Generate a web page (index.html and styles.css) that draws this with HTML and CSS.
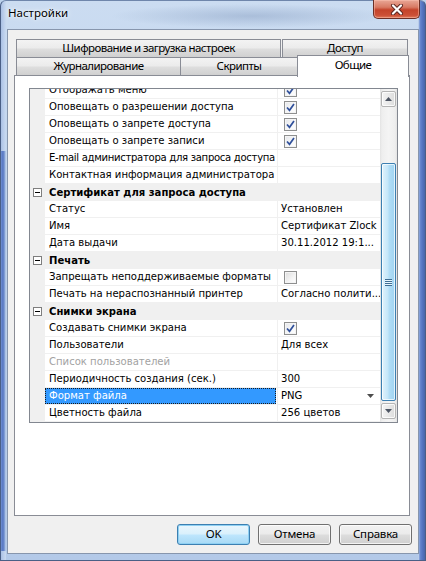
FILE: index.html
```html
<!DOCTYPE html>
<html lang="ru">
<head>
<meta charset="utf-8">
<title>Настройки</title>
<link rel="stylesheet" href="styles.css">
</head>
<body>
<div class="window">
  <div class="titlebar">
    <span class="title">Настройки</span>
    <div class="close">
      <svg width="14" height="11" viewBox="0 0 14 11">
        <path d="M3 1.5 L11 9.5 M11 1.5 L3 9.5" stroke="#5b2620" stroke-width="4" stroke-linecap="round"/>
        <path d="M3 1.5 L11 9.5 M11 1.5 L3 9.5" stroke="#ffffff" stroke-width="2.2" stroke-linecap="round"/>
      </svg>
    </div>
  </div>
  <div class="client">
    <div class="tabs">
      <div class="tabrow row1">
        <div class="tab t-enc">Шифрование и загрузка настроек</div>
        <div class="tab t-acc">Доступ</div>
      </div>
      <div class="tabrow row2">
        <div class="tab t-log">Журналирование</div>
        <div class="tab t-scr">Скрипты</div>
        <div class="tab t-gen active">Общие</div>
      </div>
    </div>
    <div class="panel">
      <div class="grid">
        <div class="rows">
          <div class="list">
            <div class="row"><span class="gut"></span><span class="name">Отображать меню</span><span class="val"><span class="cb on"><svg width="11" height="11" viewBox="0 0 11 11"><path d="M2 5.5 L4.5 8.3 L9 2" fill="none" stroke="#2f4f9a" stroke-width="1.7"/></svg></span></span></div>
            <div class="row"><span class="gut"></span><span class="name">Оповещать о разрешении доступа</span><span class="val"><span class="cb on"><svg width="11" height="11" viewBox="0 0 11 11"><path d="M2 5.5 L4.5 8.3 L9 2" fill="none" stroke="#2f4f9a" stroke-width="1.7"/></svg></span></span></div>
            <div class="row"><span class="gut"></span><span class="name">Оповещать о запрете доступа</span><span class="val"><span class="cb on"><svg width="11" height="11" viewBox="0 0 11 11"><path d="M2 5.5 L4.5 8.3 L9 2" fill="none" stroke="#2f4f9a" stroke-width="1.7"/></svg></span></span></div>
            <div class="row"><span class="gut"></span><span class="name">Оповещать о запрете записи</span><span class="val"><span class="cb on"><svg width="11" height="11" viewBox="0 0 11 11"><path d="M2 5.5 L4.5 8.3 L9 2" fill="none" stroke="#2f4f9a" stroke-width="1.7"/></svg></span></span></div>
            <div class="row"><span class="gut"></span><span class="name tight">E-mail администратора для запроса доступа</span><span class="val"></span></div>
            <div class="row"><span class="gut"></span><span class="name">Контактная информация администратора</span><span class="val"></span></div>
            <div class="cat"><span class="box"></span><span class="ctext">Сертификат для запроса доступа</span></div>
            <div class="row"><span class="gut"></span><span class="name">Статус</span><span class="val">Установлен</span></div>
            <div class="row"><span class="gut"></span><span class="name">Имя</span><span class="val">Сертификат Zlock</span></div>
            <div class="row"><span class="gut"></span><span class="name">Дата выдачи</span><span class="val">30.11.2012 19:1...</span></div>
            <div class="cat"><span class="box"></span><span class="ctext">Печать</span></div>
            <div class="row"><span class="gut"></span><span class="name">Запрещать неподдерживаемые форматы</span><span class="val"><span class="cb"></span></span></div>
            <div class="row"><span class="gut"></span><span class="name">Печать на нераспознанный принтер</span><span class="val">Согласно полити...</span></div>
            <div class="cat"><span class="box"></span><span class="ctext">Снимки экрана</span></div>
            <div class="row"><span class="gut"></span><span class="name">Создавать снимки экрана</span><span class="val"><span class="cb on"><svg width="11" height="11" viewBox="0 0 11 11"><path d="M2 5.5 L4.5 8.3 L9 2" fill="none" stroke="#2f4f9a" stroke-width="1.7"/></svg></span></span></div>
            <div class="row"><span class="gut"></span><span class="name">Пользователи</span><span class="val">Для всех</span></div>
            <div class="row"><span class="gut"></span><span class="name disabled">Список пользователей</span><span class="val"></span></div>
            <div class="row"><span class="gut"></span><span class="name">Периодичность создания (сек.)</span><span class="val">300</span></div>
            <div class="row selected"><span class="gut"></span><span class="name"><span class="focus">Формат файла</span></span><span class="val combo"><span class="ctxt">PNG</span><span class="drop"><svg width="7" height="4" viewBox="0 0 7 4"><path d="M0 0 H7 L3.5 4 Z" fill="#4d4d4d"/></svg></span></span></div>
            <div class="row"><span class="gut"></span><span class="name">Цветность файла</span><span class="val">256 цветов</span></div>
          </div>
        </div>
        <div class="scrollbar">
          <div class="sbtn"><svg width="7" height="4" viewBox="0 0 7 4"><path d="M0 4 H7 L3.5 0 Z" fill="#4d5563"/></svg></div>
          <div class="track">
            <div class="thumb"><span class="grip"></span></div>
          </div>
          <div class="sbtn"><svg width="7" height="4" viewBox="0 0 7 4"><path d="M0 0 H7 L3.5 4 Z" fill="#4d5563"/></svg></div>
        </div>
      </div>
    </div>
    <div class="buttons">
      <div class="btn default">OK</div>
      <div class="btn">Отмена</div>
      <div class="btn">Справка</div>
    </div>
  </div>
</div>
</body>
</html>
```
FILE: styles.css
```css
* { box-sizing: border-box; }
html, body { margin: 0; padding: 0; }
body {
  width: 426px;
  height: 561px;
  overflow: hidden;
  background: #bcd2ec;
  font-family: "DejaVu Sans", sans-serif;
}
.window {
  width: 426px;
  height: 561px;
  padding: 0 6px 6px 6px;
  display: flex;
  flex-direction: column;
  border: 1px solid #4a5f86;
  border-top-color: #6f86ab;
  border-radius: 6px 6px 0 0;
  background-color: #c3d6ee;
  background-image:
    radial-gradient(ellipse 140px 12px at 250px 15px, rgba(110, 135, 175, 0.35), rgba(110, 135, 175, 0) 100%),
    linear-gradient(to right, rgba(0,0,0,0) 417px, #d6e2f2 417px, #9db6e2 418px, #6a8ad0 419px, #5677c4 421px, #4966aa 424px),
    linear-gradient(to right, #6f8fd2 0, #5676c2 2px, #8eaada 4px, #c9daf0 5px, rgba(0,0,0,0) 5px),
    linear-gradient(to right, #a9c0e4 0, #b7cbea 2px, #c9daf0 5px, rgba(0,0,0,0) 5px),
    linear-gradient(to bottom, #cbdcf1 0, #bed3ed 40%, #b3c9e8 100%);
  background-size: auto, 426px 100%, 6px 400px, 6px 100%, auto;
  background-position: 0 0, 0 0, 0 150px, 0 0, 0 0;
  background-repeat: no-repeat;
}
.titlebar {
  height: 28px;
  margin: 0 -7px;
  padding-left: 8px;
  display: flex;
  align-items: flex-start;
  flex-shrink: 0;
}
.title {
  font-family: "Noto Sans", sans-serif;
  font-size: 11.5px;
  color: #000;
  margin-top: 4px;
  text-shadow: 0 0 6px rgba(255,255,255,0.9), 0 0 3px rgba(255,255,255,0.9);
}
.close {
  margin-left: auto;
  margin-right: 6px;
  width: 47px;
  height: 19px;
  margin-top: -1px;
  border: 1px solid #6b2f26;
  border-top: none;
  border-radius: 0 0 5px 5px;
  background: linear-gradient(to bottom, #e9a796 0%, #d87a64 40%, #c4432a 55%, #cc5036 85%, #e07b5c 100%);
  box-shadow: inset 0 0 0 1px rgba(255, 200, 185, 0.45);
  display: flex;
  align-items: center;
  justify-content: center;
}
.client {
  width: 412px;
  height: 525px;
  background: #f0f0f0;
  border: 1px solid #8796ad;
  padding-top: 9px;
  display: flex;
  flex-direction: column;
}
.tabs {
  margin-left: 6px;
  font-family: "Noto Sans", sans-serif;
  font-size: 11.5px;
  letter-spacing: -0.55px;
}
.tabrow { display: flex; height: 18px; }
.row1 { padding-left: 2px; }
.row2 { padding-left: 2px; }
.tab {
  height: 18px;
  border: 1px solid #898c95;
  border-bottom: none;
  background: linear-gradient(to bottom, #f3f3f3 0%, #ebebeb 48%, #dedede 52%, #d0d0d0 100%);
  text-align: center;
  line-height: 16px;
  color: #000;
  white-space: nowrap;
}
.t-enc { width: 265px; }
.t-acc { width: 126px; margin-left: 1px; }
.t-log { width: 165px; }
.t-scr { width: 118px; margin-left: -1px; }
.t-gen { width: 112px; margin-left: -1px; }
.tab.active {
  position: relative;
  z-index: 1;
  height: 22px;
  margin-top: -2px;
  background: #fff;
  line-height: 17px;
}
.panel {
  margin-left: 6px;
  width: 396px;
  height: 441px;
  border: 1px solid #898c95;
  background: #fff;
  padding: 12px 0 0 14px;
}
.grid {
  width: 369px;
  height: 335px;
  border: 1px solid #828790;
  display: flex;
  background: #fff;
}
.rows {
  flex: 1;
  overflow: hidden;
  font-family: "DejaVu Sans Condensed", "DejaVu Sans", sans-serif;
  font-size: 11.2px;
  color: #000;
}
.list { margin-top: -7px; }
.row {
  display: grid;
  grid-template-columns: 15px 232px 1fr;
  height: 17px;
}
.gut { background: #f0f0f0; }
.name {
  border-bottom: 1px solid #f0f0f0;
  padding-left: 4px;
  line-height: 16px;
  white-space: nowrap;
  overflow: hidden;
}
.name.tight { letter-spacing: -0.3px; }
.name.disabled { color: #a2a2a2; }
.val {
  border-bottom: 1px solid #f0f0f0;
  border-left: 1px solid #f0f0f0;
  padding-left: 3px;
  line-height: 16px;
  white-space: nowrap;
  overflow: hidden;
  display: flex;
  align-items: center;
}
.cb {
  width: 13px;
  height: 13px;
  margin-left: 3px;
  border: 1px solid #8e8f8f;
  background: linear-gradient(135deg, #dcdcdc 0%, #f4f4f4 60%, #ffffff 100%);
  box-shadow: inset 0 0 0 1px #f4f4f4;
  display: flex;
  align-items: center;
  justify-content: center;
}
.cb.on { background: linear-gradient(135deg, #e4e6ea 0%, #f7f8f9 60%, #ffffff 100%); }
.cat {
  height: 17px;
  background: #f0f0f0;
  display: flex;
  align-items: center;
  font-weight: bold;
  white-space: nowrap;
}
.box {
  width: 9px;
  height: 9px;
  margin-left: 3px;
  border: 1px solid #7e7e7e;
  background: #fff;
  display: flex;
  align-items: center;
  justify-content: center;
}
.box::after {
  content: "";
  width: 5px;
  height: 1px;
  background: #000;
}
.ctext { margin-left: 7px; line-height: 16px; }
.row.selected .name {
  background: #3399ff;
  color: #fff;
  padding: 0;
  border-right: 1px solid #fff;
}
.focus {
  display: block;
  height: 16px;
  padding-left: 3px;
  border: 1px dotted #1a1a1a;
  line-height: 14px;
}
.val.combo { padding-right: 2px; }
.ctxt { flex: 1; }
.drop {
  width: 15px;
  height: 14px;
  display: flex;
  align-items: center;
  justify-content: center;
}
.scrollbar {
  width: 17px;
  background: linear-gradient(to right, #e3e3e3 0, #eeeeee 2px, #f4f4f4 50%, #eeeeee 15px, #e3e3e3 17px);
  padding: 2px 1px 3px 1px;
  display: flex;
  flex-direction: column;
}
.sbtn {
  height: 16px;
  border: 1px solid #b4b4b4;
  border-radius: 2px;
  background: linear-gradient(to right, #f4f4f4, #e9e9e9 50%, #dcdcdc);
  box-shadow: inset 0 0 0 1px rgba(255,255,255,0.8);
  display: flex;
  align-items: center;
  justify-content: center;
}
.track { flex: 1; }
.thumb {
  margin-top: 56px;
  height: 238px;
  border: 1px solid #3c7fb1;
  border-radius: 2px;
  background: linear-gradient(to right, #e2f3fc 0%, #c4e6f9 45%, #b1ddf6 55%, #9fd3f1 100%);
  box-shadow: inset 0 0 0 1px rgba(255,255,255,0.7);
  display: flex;
  align-items: center;
  justify-content: center;
}
.grip {
  width: 7px;
  height: 7px;
  background: repeating-linear-gradient(to bottom, #3f6d93 0, #3f6d93 1px, #e8f6fd 1px, #e8f6fd 2px);
}
.buttons {
  margin-top: 8px;
  display: flex;
  justify-content: flex-end;
  gap: 8px;
  padding-right: 6px;
}
.btn {
  width: 73px;
  height: 21px;
  border: 1px solid #707070;
  border-radius: 3px;
  background: linear-gradient(to bottom, #f2f2f2 0%, #ebebeb 48%, #dddddd 52%, #cfcfcf 100%);
  box-shadow: inset 0 0 0 1px rgba(255,255,255,0.75);
  font-family: "Noto Sans", sans-serif;
  font-size: 11.5px;
  letter-spacing: -0.2px;
  line-height: 18px;
  text-align: center;
  color: #000;
}
.btn.default {
  border-color: #3c7fb1;
  background: linear-gradient(to bottom, #eaf6fd 0%, #d9f0fc 48%, #bee6fd 52%, #a7d9f5 100%);
  box-shadow: inset 0 0 0 1px #8ed0f3;
}
```
